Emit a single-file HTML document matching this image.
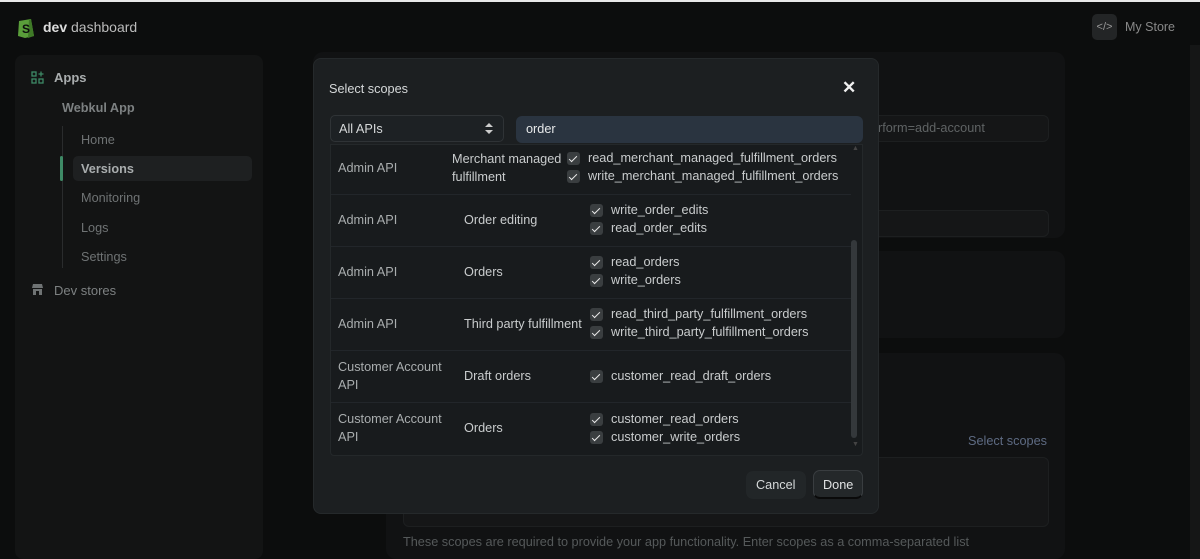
<!DOCTYPE html>
<html><head><meta charset="utf-8"><style>
*{box-sizing:border-box;margin:0;padding:0}
body{width:1200px;height:559px;background:#0c0d0d;font-family:"Liberation Sans",sans-serif;position:relative;overflow:hidden;color:#d0d3d4;font-size:12.7px}
.abs{position:absolute}
.topline{left:0;top:0;width:1200px;height:2px;background:#e8e8e8}
.side{left:15px;top:55px;width:248px;height:504px;background:#131414;border-radius:8px}
.nav{color:#6f7374}
.panel{background:#111213;border-radius:10px}
.inp{background:#151617;border-radius:6px;border:1px solid #1d1f20}
.modal{left:313px;top:58px;width:566px;height:456px;background:#1c1f21;border-radius:8px;border:1px solid #25292b}
.table{left:16px;top:85px;width:533px;height:312px;background:#181b1d;border:1px solid #24282a;border-radius:0 0 4px 4px}
.row{position:absolute;left:0;width:520px;border-bottom:1px solid #22262a}
.cb{position:absolute;width:13px;height:13px;background:#3a3e40;border-radius:3px}
.cb:after{content:"";position:absolute;left:4px;top:1.5px;width:3px;height:7px;border:solid #e8e8e8;border-width:0 1.6px 1.6px 0;transform:rotate(45deg)}
.t{position:absolute;white-space:nowrap;color:#c9cccd}
.g{color:#a9adae}
</style></head><body>
<div class="abs topline"></div>
<svg class="abs" style="left:16px;top:16px" width="20" height="23" viewBox="0 0 20 23"><path d="M3 5 L15 3 L18 20 L9 22 L2 20 Z" fill="#5a9e3a"/><path d="M13 3 L15 3 L18 20 L12 22Z" fill="#3f7a27"/><text x="6" y="17" font-size="12" font-weight="bold" fill="#0c0d0d" font-family="Liberation Sans">S</text></svg>
<div class="abs" style="left:43px;top:19px;font-size:14px;color:#bbb"><b style="color:#ddd">dev</b> dashboard</div>
<div class="abs" style="left:1092px;top:14px;width:25px;height:26px;background:#232526;border-radius:5px;color:#999;font-size:11px;text-align:center;line-height:26px">&lt;/&gt;</div>
<div class="abs" style="left:1125px;top:20px;color:#888;font-size:12.5px">My Store</div>
<div class="abs" style="left:1190px;top:45px;width:10px;height:514px;background:#151616"></div>
<div class="abs side"></div>
<svg class="abs" style="left:31px;top:71px" width="13" height="13" viewBox="0 0 13 13" fill="none" stroke="#3e8a66" stroke-width="1.3"><rect x="1" y="1" width="4" height="4"/><rect x="1" y="8" width="4" height="4"/><rect x="8" y="8" width="4" height="4"/><path d="M10 0.5v5M7.5 3h5"/></svg>
<div class="abs" style="left:54px;top:70px;color:#a9adae;font-size:13px;font-weight:bold">Apps</div>
<div class="abs" style="left:62px;top:101px;color:#7d8182;font-weight:bold">Webkul App</div>
<div class="abs" style="left:62px;top:126px;width:1px;height:142px;background:#2a2c2d"></div>
<div class="abs" style="left:60px;top:156px;width:3px;height:25px;background:#3e8a66;border-radius:2px"></div>
<div class="abs" style="left:73px;top:156px;width:179px;height:25px;background:#1e2021;border-radius:5px"></div>
<div class="abs nav" style="left:81px;top:133px">Home</div>
<div class="abs" style="left:81px;top:162px;color:#a9adae;font-weight:bold">Versions</div>
<div class="abs nav" style="left:81px;top:191px">Monitoring</div>
<div class="abs nav" style="left:81px;top:221px">Logs</div>
<div class="abs nav" style="left:81px;top:250px">Settings</div>
<svg class="abs" style="left:31px;top:283px" width="13" height="13" viewBox="0 0 13 13"><path d="M1 5 L2 1 H11 L12 5 Z" fill="#6f7374"/><rect x="2" y="6" width="9" height="6" fill="#6f7374"/><rect x="5" y="8" width="3" height="4" fill="#131414"/></svg>
<div class="abs" style="left:54px;top:283px;color:#7d8182;font-size:13px">Dev stores</div>
<div class="abs panel" style="left:313px;top:52px;width:752px;height:186px"></div>
<div class="abs inp" style="left:700px;top:115px;width:349px;height:27px"></div>
<div class="abs" style="left:878px;top:121px;color:#5f6364">rform=add-account</div>
<div class="abs inp" style="left:700px;top:210px;width:349px;height:27px"></div>
<div class="abs panel" style="left:386px;top:251px;width:679px;height:87px"></div>
<div class="abs panel" style="left:386px;top:353px;width:679px;height:206px"></div>
<div class="abs" style="left:968px;top:434px;color:#5e6b83">Select scopes</div>
<div class="abs inp" style="left:403px;top:457px;width:646px;height:70px"></div>
<div class="abs" style="left:403px;top:535px;color:#55595a">These scopes are required to provide your app functionality. Enter scopes as a comma-separated list</div>
<div class="abs modal">
 <div class="t" style="left:15px;top:23px;color:#d5d8d9">Select scopes</div>
 <div class="t" style="left:528px;top:19px;font-size:17px;font-weight:bold;color:#f0f0f0">✕</div>
 <div class="abs" style="left:16px;top:56px;width:174px;height:27px;background:#1d2124;border:1px solid #2f3336;border-radius:5px"></div>
 <div class="t" style="left:25px;top:63px;color:#d5d8d9">All APIs</div>
 <svg class="abs" style="left:171px;top:64px" width="8" height="11"><path d="M0 4 L4 0 L8 4Z M0 7 L4 11 L8 7Z" fill="#ccc"/></svg>
 <div class="abs" style="left:202px;top:57px;width:347px;height:27px;background:#2a3440;border-radius:6px"></div>
 <div class="t" style="left:212px;top:63px;color:#e6e8e9">order</div>
 <div class="abs table">
  <div class="row" style="top:0;height:50px"></div>
  <div class="row" style="top:50px;height:52px"></div>
  <div class="row" style="top:102px;height:52px"></div>
  <div class="row" style="top:154px;height:52px"></div>
  <div class="row" style="top:206px;height:52px"></div>
  <div class="abs" style="left:520px;top:95px;width:6px;height:198px;background:#34383b;border-radius:3px"></div>
  <div class="t" style="left:521px;top:0;font-size:7px;color:#444">▲</div>
  <div class="t" style="left:521px;top:296px;font-size:7px;color:#444">▼</div>
 </div>
 <div class="t g" style="left:24px;top:102px">Admin API</div>
 <div class="t" style="left:138px;top:93px">Merchant managed</div>
 <div class="t" style="left:138px;top:111px">fulfillment</div>
 <div class="cb" style="left:253px;top:93px"></div><div class="t" style="left:274px;top:92px">read_merchant_managed_fulfillment_orders</div>
 <div class="cb" style="left:253px;top:111px"></div><div class="t" style="left:274px;top:110px">write_merchant_managed_fulfillment_orders</div>

 <div class="t g" style="left:24px;top:154px">Admin API</div>
 <div class="t" style="left:150px;top:154px">Order editing</div>
 <div class="cb" style="left:276px;top:145px"></div><div class="t" style="left:297px;top:144px">write_order_edits</div>
 <div class="cb" style="left:276px;top:163px"></div><div class="t" style="left:297px;top:162px">read_order_edits</div>

 <div class="t g" style="left:24px;top:206px">Admin API</div>
 <div class="t" style="left:150px;top:206px">Orders</div>
 <div class="cb" style="left:276px;top:197px"></div><div class="t" style="left:297px;top:196px">read_orders</div>
 <div class="cb" style="left:276px;top:215px"></div><div class="t" style="left:297px;top:214px">write_orders</div>

 <div class="t g" style="left:24px;top:258px">Admin API</div>
 <div class="t" style="left:150px;top:258px">Third party fulfillment</div>
 <div class="cb" style="left:276px;top:249px"></div><div class="t" style="left:297px;top:248px">read_third_party_fulfillment_orders</div>
 <div class="cb" style="left:276px;top:267px"></div><div class="t" style="left:297px;top:266px">write_third_party_fulfillment_orders</div>

 <div class="t g" style="left:24px;top:301px">Customer Account</div>
 <div class="t g" style="left:24px;top:319px">API</div>
 <div class="t" style="left:150px;top:310px">Draft orders</div>
 <div class="cb" style="left:276px;top:311px"></div><div class="t" style="left:297px;top:310px">customer_read_draft_orders</div>

 <div class="t g" style="left:24px;top:353px">Customer Account</div>
 <div class="t g" style="left:24px;top:371px">API</div>
 <div class="t" style="left:150px;top:362px">Orders</div>
 <div class="cb" style="left:276px;top:354px"></div><div class="t" style="left:297px;top:353px">customer_read_orders</div>
 <div class="cb" style="left:276px;top:372px"></div><div class="t" style="left:297px;top:371px">customer_write_orders</div>

 <div class="abs" style="left:432px;top:412px;width:60px;height:28px;background:#222628;border-radius:7px"></div>
 <div class="t" style="left:442px;top:419px;color:#d5d8d9">Cancel</div>
 <div class="abs" style="left:499px;top:411px;width:50px;height:29px;background:#24282a;border:1px solid #393d40;border-bottom:2px solid #0a0a0a;border-radius:7px"></div>
 <div class="t" style="left:509px;top:419px;color:#e0e2e3">Done</div>
</div>
</body></html>
